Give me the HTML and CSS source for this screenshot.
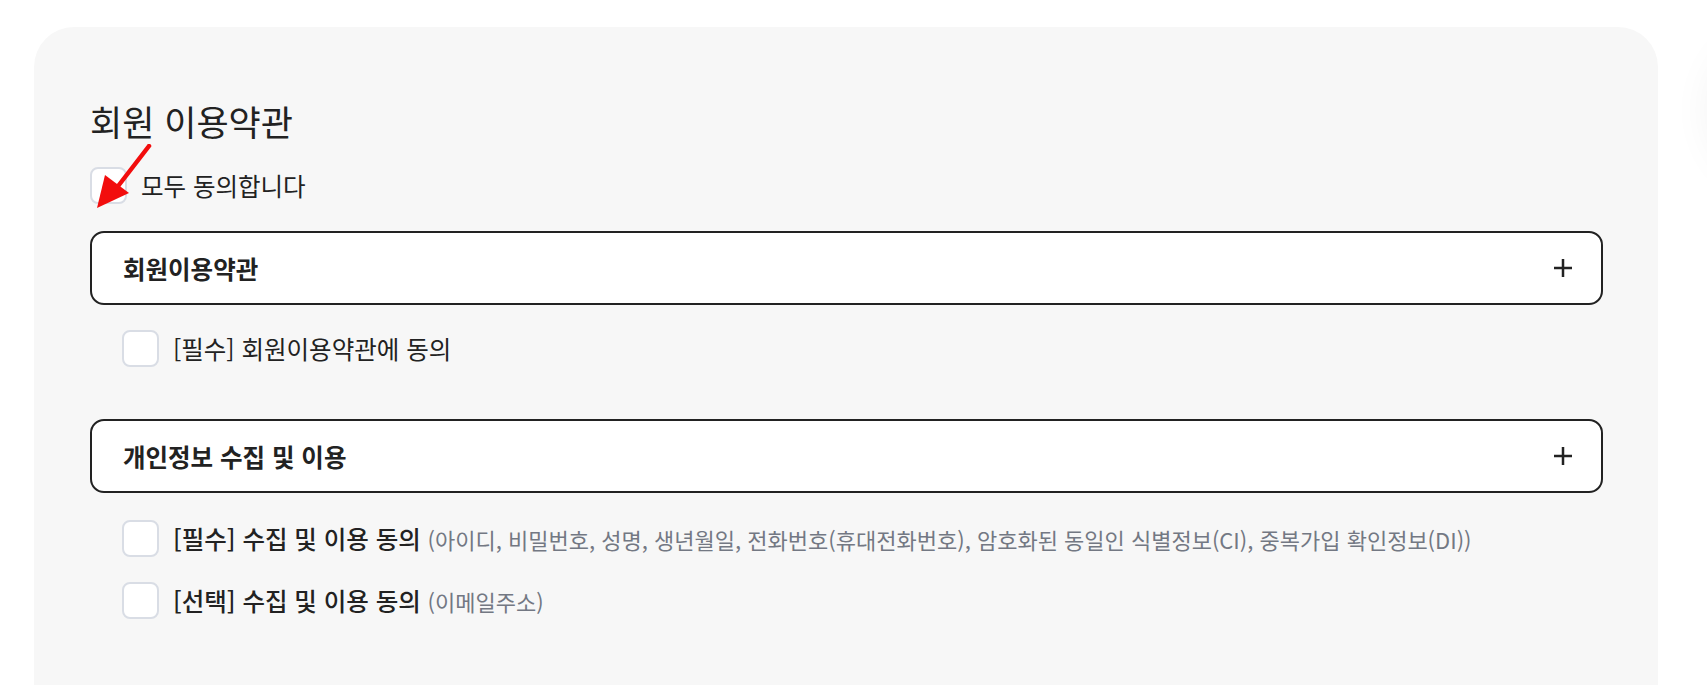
FILE: index.html
```html
<!DOCTYPE html>
<html lang="ko">
<head>
  <meta charset="UTF-8">
  <title>회원 이용약관</title>
  <link rel="stylesheet" href="styles.css">
</head>
<body>

  <!-- ──────────  TERMS CARD  ────────── -->
  <main class="page">
    <section class="card">
      <h1 class="title">회원 이용약관</h1>

      <label class="check-row">
        <span class="box"></span>
        <span class="label">모두 동의합니다</span>
      </label>

      <!-- 회원이용약관 -->
      <div class="group">
        <button class="accordion">
          <span>회원이용약관</span>
          <svg class="plus" viewBox="0 0 20 20" width="20" height="20"><path d="M10 1v18M1 10h18" stroke="#222" stroke-width="2.5" fill="none"/></svg>
        </button>
        <ul class="items">
          <li>
            <label class="check-row">
              <span class="box"></span>
              <span class="label">[필수] 회원이용약관에 동의</span>
            </label>
          </li>
        </ul>
      </div>

      <!-- 개인정보 수집 및 이용 -->
      <div class="group">
        <button class="accordion">
          <span>개인정보 수집 및 이용</span>
          <svg class="plus" viewBox="0 0 20 20" width="20" height="20"><path d="M10 1v18M1 10h18" stroke="#222" stroke-width="2.5" fill="none"/></svg>
        </button>
        <ul class="items">
          <li>
            <label class="check-row">
              <span class="box"></span>
              <span class="label strong">[필수] 수집 및 이용 동의 <small>(아이디, 비밀번호, 성명, 생년월일, 전화번호(휴대전화번호), 암호화된 동일인 식별정보(CI), 중복가입 확인정보(DI))</small></span>
            </label>
          </li>
          <li>
            <label class="check-row">
              <span class="box"></span>
              <span class="label strong">[선택] 수집 및 이용 동의 <small>(이메일주소)</small></span>
            </label>
          </li>
        </ul>
      </div>
    </section>
  </main>

  <!-- annotation arrow -->
  <svg class="arrow" viewBox="0 0 60 70" width="60" height="70">
    <path d="M57 2 L20 50" stroke="#f20d0d" stroke-width="4.5" stroke-linecap="round"/>
    <polygon points="5,64 13,31 37,49" fill="#f20d0d"/>
  </svg>

  <div class="float-shadow"></div>
</body>
</html>
```

FILE: styles.css
```css
/* Page layout */
html, body {
  margin: 0;
  padding: 0;
  background: #ffffff;
  font-family: 'Noto Sans CJK KR', 'Noto Sans', sans-serif;
  color: #222;
  overflow: hidden;
}

.page {
  padding: 27px 49px 0 34px;
}

/* Card */
.card {
  background: #f7f7f7;
  border-radius: 40px 40px 0 0;
  padding: 75px 55px 120px 56px;
  min-height: 700px;
  box-sizing: border-box;
  display: flex;
  flex-direction: column;
}

.title {
  margin: 0 0 27px;
  font-size: 35px;
  line-height: 38px;
  font-weight: 400;
}

/* Checkbox rows */
.check-row {
  display: flex;
  align-items: center;
  gap: 14px;
  cursor: pointer;
}
.box {
  flex: none;
  width: 37px;
  height: 37px;
  box-sizing: border-box;
  border: 2px solid #d9dde5;
  border-radius: 8px;
  background: #ffffff;
}
.label {
  font-size: 24.5px;
  line-height: 32px;
}
.label.strong {
  font-weight: 500;
}
.label small {
  font-size: 22px;
  font-weight: 400;
  color: #737883;
}

/* Groups */
.group {
  margin-top: 27px;
}
.group + .group {
  margin-top: 52px;
}
.accordion {
  display: flex;
  justify-content: space-between;
  align-items: center;
  width: 100%;
  height: 74px;
  padding: 0 28px 0 31px;
  background: #ffffff;
  border: 2px solid #222;
  border-radius: 14px;
  font-family: inherit;
  font-size: 24.5px;
  font-weight: 700;
  color: #222;
  cursor: pointer;
}

.items {
  list-style: none;
  margin: 0;
  padding: 25px 0 0 32px;
  display: flex;
  flex-direction: column;
  gap: 25px;
}
.group + .group .items {
  padding-top: 27px;
}

/* Overlays */
.arrow {
  position: absolute;
  left: 92px;
  top: 144px;
}
.float-shadow {
  position: absolute;
  left: 1708px;
  top: 30px;
  width: 160px;
  height: 160px;
  border-radius: 50%;
  box-shadow: 0 0 40px rgba(0, 0, 0, 0.05);
}
```
